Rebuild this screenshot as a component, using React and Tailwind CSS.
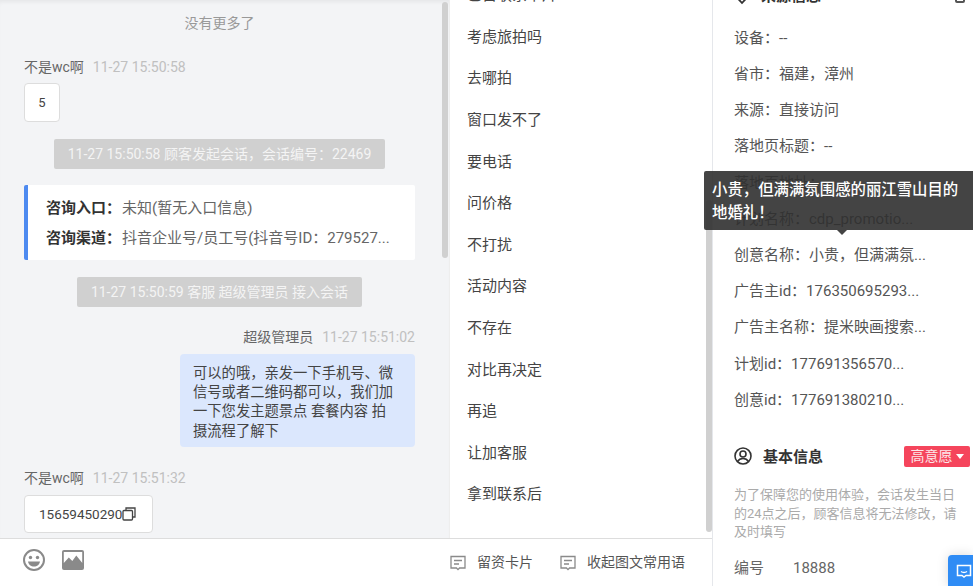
// App.jsx
import React from 'react';

const quickReplies = [
  '已留联系卡片',
  '考虑旅拍吗',
  '去哪拍',
  '窗口发不了',
  '要电话',
  '问价格',
  '不打扰',
  '活动内容',
  '不存在',
  '对比再决定',
  '再追',
  '让加客服',
  '拿到联系后',
];

const sourceRows = [
  '设备：--',
  '省市：福建，漳州',
  '来源：直接访问',
  '落地页标题：--',
  '落地页地址：--',
  '计划名称：cdp_promotio...',
  '创意名称：小贵，但满满氛...',
  '广告主id：176350695293...',
  '广告主名称：提米映画搜索...',
  '计划id：177691356570...',
  '创意id：177691380210...',
];

const NameRow = ({ name, time, right }) => (
  <div className={`flex h-[20px] items-center gap-[9px] text-[14px] ${right ? 'justify-end' : ''}`}>
    <span className="text-[#666]">{name}</span>
    <span className="text-[#c0c0c0]">{time}</span>
  </div>
);

const SystemPill = ({ children }) => (
  <div className="flex justify-center">
    <div className="flex h-[30px] items-center rounded-[2px] bg-[#d0d0d0] px-[14px] text-[14px] text-[#f4f4f4]">
      {children}
    </div>
  </div>
);

const CardIcon = () => (
  <svg width="18" height="18" viewBox="0 0 18 18" fill="none" stroke="#8a8a8a" strokeWidth="1.3">
    <path d="M2 2.5h14v11.5h-5.5l-1.5 1.6-1.5-1.6H2z" />
    <path d="M5 6.5h8M5 10h5" />
  </svg>
);

const App = () => {
  return (
    <div
      className="relative flex h-[586px] w-[973px] overflow-hidden bg-white text-[#444]"
      style={{ fontFamily: 'Roboto, "Noto Sans CJK SC", sans-serif' }}
    >
      <div className="flex w-[712px] flex-col">
        <div className="flex h-[538px]">
          {/* chat */}
          <div className="relative w-[449px] overflow-hidden bg-[#f3f4f6] pl-[24px] pr-[34px] shadow-[inset_0_4px_4px_-2px_rgba(0,0,0,0.06)]">
            <div className="mt-[13px] flex h-[20px] items-center justify-center text-[14px] text-[#999]">没有更多了</div>
            <div className="mt-[24px]">
              <NameRow name="不是wc啊" time="11-27 15:50:58" />
            </div>
            <div className="mt-[6px] flex h-[39px] w-[36px] items-center justify-center rounded-[4px] border border-[#ddd] bg-white text-[13px]">
              5
            </div>
            <div className="mt-[17px]">
              <SystemPill>11-27 15:50:58 顾客发起会话，会话编号：22469</SystemPill>
            </div>
            <div className="mt-[16px] flex h-[75px] flex-col justify-center gap-[10px] rounded-[2px] border-l-4 border-[#4d8af0] bg-white pl-[18px] pt-[2px] text-[15px]">
              <div className="flex h-[20px] items-center">
                <b className="mr-[1px] font-bold text-[#333]">咨询入口：</b>
                <span className="text-[#666]">未知(暂无入口信息)</span>
              </div>
              <div className="flex h-[20px] items-center">
                <b className="mr-[1px] font-bold text-[#333]">咨询渠道：</b>
                <span className="text-[#666]">抖音企业号/员工号(抖音号ID：279527...</span>
              </div>
            </div>
            <div className="mt-[17px]">
              <SystemPill>11-27 15:50:59 客服 超级管理员 接入会话</SystemPill>
            </div>
            <div className="mt-[20px]">
              <NameRow right name="超级管理员" time="11-27 15:51:02" />
            </div>
            <div className="mt-[7px] flex justify-end">
              <div className="h-[93px] w-[235px] rounded-[4px] bg-[#dbe7fd] pb-[8px] pl-[13px] pr-[16px] pt-[10px] text-[14.3px] leading-[19.2px] text-[#444]">
                可以的哦，亲发一下手机号、微信号或者二维码都可以，我们加一下您发主题景点 套餐内容 拍摄流程了解下
              </div>
            </div>
            <div className="mt-[21px]">
              <NameRow name="不是wc啊" time="11-27 15:51:32" />
            </div>
            <div className="mt-[7px] flex h-[38px] w-[129px] items-center rounded-[4px] border border-[#ddd] bg-white pl-[14px] text-[13.5px]">
              15659450290
              <svg width="14" height="14" viewBox="0 0 14 14" fill="none" stroke="#444" strokeWidth="1.3">
                <rect x="1" y="3.5" width="9.5" height="9.5" rx="1" />
                <path d="M4 3V1h9v9h-2.2" />
              </svg>
            </div>
            <div className="absolute right-[1px] top-[2px] h-[256px] w-[6px] rounded-full bg-[#d0d0d0]" />
          </div>

          {/* quick replies */}
          <div className="relative flex-1 overflow-hidden border-l border-[#eee] bg-white pl-[17px]">
            <div className="mt-[-25.4px]">
              {quickReplies.map((item) => (
                <div key={item} className="flex h-[41.6px] items-center text-[15px] text-[#444]">
                  {item}
                </div>
              ))}
            </div>
            <div className="absolute right-0 top-[200px] h-[332px] w-[6px] rounded-full bg-[#d0d0d0]" />
          </div>
        </div>

        {/* toolbar */}
        <div className="flex h-[48px] items-center justify-between border-t border-[#ddd] bg-white pl-[23px] pr-[27px]">
          <div className="mt-[-5px] flex items-center gap-[17px]">
            <svg width="22" height="22" viewBox="0 0 22 22">
              <circle cx="11" cy="11" r="10" fill="none" stroke="#8a8a8a" strokeWidth="2" />
              <circle cx="7.5" cy="8.5" r="1.7" fill="#8a8a8a" />
              <circle cx="14.5" cy="8.5" r="1.7" fill="#8a8a8a" />
              <path d="M5 12.5h12c-.4 3-3 5-6 5s-5.600-2-6-5z" fill="#8a8a8a" />
            </svg>
            <svg width="22" height="22" viewBox="0 0 22 22">
              <rect width="22" height="20" y="1" rx="2" fill="#8a8a8a" />
              <rect x="1.800" y="3" width="18.400" height="11" fill="#fff" />
              <path d="M1.800 14l5-5.500 3.500 3.500 4-5.500 6 7.500v3h-18.500z" fill="#8a8a8a" />
            </svg>
          </div>
          <div className="flex items-center gap-[26px] text-[14px] text-[#555]">
            <div className="flex items-center gap-[10px]">
              <CardIcon />
              留资卡片
            </div>
            <div className="flex items-center gap-[10px]">
              <CardIcon />
              收起图文常用语
            </div>
          </div>
        </div>
      </div>

      {/* customer info */}
      <div className="w-[261px] overflow-hidden border-l border-[#e5e7eb] bg-white pl-[21px]">
        <div className="mt-[-14px] flex h-[20px] items-center justify-between pr-[8px]">
          <div className="flex items-center gap-[11px]">
            <svg width="16" height="18" viewBox="0 0 16 18" fill="none" stroke="#333" strokeWidth="1.800">
              <path d="M1.500 6h13v3L8 16 1.500 9z" />
            </svg>
            <span className="text-[15px] font-bold text-[#333]">来源信息</span>
          </div>
          <div className="h-[14px] w-[10px] rounded-[2px] border-2 border-[#555]" />
        </div>
        <div className="mt-[14px]">
          {sourceRows.map((row) => (
            <div key={row} className="flex h-[36.2px] items-center whitespace-nowrap text-[15px] text-[#555]">
              {row}
            </div>
          ))}
        </div>
        <div className="mt-[26px] flex h-[24px] items-center justify-between pr-[3px]">
          <div className="flex items-center gap-[11px]">
            <svg width="18" height="18" viewBox="0 0 18 18" fill="none" stroke="#333" strokeWidth="1.600">
              <circle cx="9" cy="9" r="8" />
              <circle cx="9" cy="7" r="3" />
              <path d="M3.500 14.500c1.200-2 3.200-3 5.500-3s4.300 1 5.500 3" />
            </svg>
            <span className="pt-[3px] text-[15px] font-bold text-[#333]">基本信息</span>
          </div>
          <div className="flex h-[21px] w-[66px] items-center justify-center gap-[3px] rounded-[2px] bg-[#f5455c] text-[14px] text-[#fde8ea]">
            高意愿
            <span className="h-0 w-0 border-x-[4px] border-t-[5px] border-x-transparent border-t-white" />
          </div>
        </div>
        <p className="mt-[18px] w-[228px] text-[13px] leading-[18.700px] text-[#aaa]">
          为了保障您的使用体验，会话发生当日的24点之后，顾客信息将无法修改，请及时填写
        </p>
        <div className="mt-[15px] flex items-center text-[15px] text-[#666]">
          <span className="w-[59px]">编号</span>
          <span>18888</span>
        </div>
      </div>

      {/* tooltip */}
      <div className="absolute left-[704px] top-[171px] h-[59px] w-[280px] rounded-[2px] bg-[rgba(48,48,48,0.9)] py-[8px] pl-[8px] pr-[20px] text-[15.4px] font-medium leading-[23px] text-white">
        小贵，但满满氛围感的丽江雪山目的地婚礼！
        <span className="absolute left-[133px] top-[59px] h-0 w-0 border-x-[5px] border-t-[5px] border-x-transparent border-t-[rgba(48,48,48,0.9)]" />
      </div>

      {/* floating chat button */}
      <div className="absolute bottom-0 right-0 flex h-[31px] w-[25px] items-center rounded-tl-[4px] bg-[#2f8cf5] pl-[8px] shadow-[0_0_12px_rgba(0,0,0,0.15)]">
        <svg width="16" height="16" viewBox="0 0 16 16" fill="none" stroke="#fff" strokeWidth="1.500" className="shrink-0">
          <path d="M1.500 2.500h13v10h-4.500l-2 1.500-2-1.500h-4.500z" />
          <path d="M5 8.500c1.800 1.200 4.200 1.200 6 0" />
        </svg>
      </div>
    </div>
  );
};

export default App;
